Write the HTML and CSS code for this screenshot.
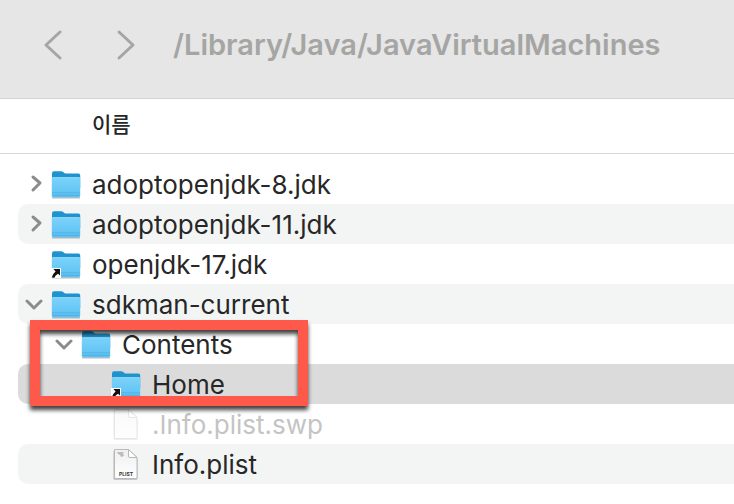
FILE: index.html
```html
<!DOCTYPE html>
<html lang="ko">
<head>
    <meta charset="UTF-8">
    <title>/Library/Java/JavaVirtualMachines</title>
    <link rel="stylesheet" href="styles.css">
</head>
<body>
    <svg class="defs" aria-hidden="true">
        <defs>
            <linearGradient id="folderFront" x1="0" y1="0" x2="0" y2="1">
                <stop offset="0" stop-color="#7bd2fa"/>
                <stop offset="1" stop-color="#5cc0f2"/>
            </linearGradient>
            <linearGradient id="paper" x1="0" y1="0" x2="0" y2="1">
                <stop offset="0" stop-color="#efefef"/>
                <stop offset="1" stop-color="#ffffff"/>
            </linearGradient>
            <symbol id="folder" viewBox="0 0 32 32">
                <path d="M2 29h28v1.500H2z" fill="#000" opacity=".25"/>
                <path d="M2 5.500Q2 3.300 4 3.300h7.200q1.200 0 2 .8l1.100 1q.4.4 1.200.4H28.500q1.700 0 1.700 1.700V20H2z" fill="#1e93cd"/>
                <path d="M1.800 10.500Q1.800 9.300 3 9.300h26q1.200 0 1.200 1.200v17q0 1.800-1.800 1.800H3.600q-1.800 0-1.800-1.800z" fill="url(#folderFront)"/>
                <path d="M2.500 9.800h27" stroke="#92dcfc" stroke-width="1"/>
                <path d="M2 24.800h28M2 27.300h28" stroke="#45aee3" stroke-width=".7"/>
            </symbol>
            <symbol id="alias" viewBox="0 0 10 10">
                <path d="M0 0h10v10H0z" fill="#fff"/>
                <path d="M2.400 1H9v6.600L7 5.700Q4.200 7.300 3.400 9.700L.7 9.400Q1.600 5.800 4.600 3.400z" fill="#111"/>
            </symbol>
            <symbol id="file" viewBox="0 0 32 32">
                <path d="M3.500 3h15l9 8v19.500q0 1.200-1.200 1.200H4.700q-1.200 0-1.200-1.200z" fill="#000" opacity=".25"/>
                <path d="M4.500 1.500h14L27 9.500v19.800q0 1.200-1.200 1.200H5.700q-1.200 0-1.200-1.200z" fill="url(#paper)" stroke="#b4b4b4" stroke-width=".9"/>
                <path d="M18.500 1.500V8q0 1.500 1.500 1.500h7z" fill="#fff" stroke="#b0b0b0" stroke-width=".9"/>
            </symbol>
        </defs>
    </svg>

    <header class="toolbar">
        <button class="nav-btn" aria-label="Back">
            <svg width="20" height="32" viewBox="0 0 20 32"><path d="M16 3L2 16l14 13"/></svg>
        </button>
        <button class="nav-btn" aria-label="Forward">
            <svg width="20" height="32" viewBox="0 0 20 32"><path d="M3 3l14 13L3 29"/></svg>
        </button>
        <h1 class="path">/Library/Java/JavaVirtualMachines</h1>
    </header>

    <div class="columns">
        <button class="column-name">이름</button>
    </div>

    <main class="files">
        <ul class="tree">
            <li class="row">
                <button class="toggle" aria-label="Expand"><svg width="20" height="20" viewBox="0 0 20 20"><path d="M8 3l7 6-7 7"/></svg></button>
                <svg class="icon"><use href="#folder"/></svg>
                <span class="name">adoptopenjdk-8.jdk</span>
            </li>
            <li class="row striped">
                <button class="toggle" aria-label="Expand"><svg width="20" height="20" viewBox="0 0 20 20"><path d="M8 3l7 6-7 7"/></svg></button>
                <svg class="icon"><use href="#folder"/></svg>
                <span class="name">adoptopenjdk-11.jdk</span>
            </li>
            <li class="row">
                <span class="toggle"></span>
                <svg class="icon"><use href="#folder"/><use href="#alias" x="1" y="20" width="10" height="10"/></svg>
                <span class="name">openjdk-17.jdk</span>
            </li>
            <li class="row striped">
                <button class="toggle" aria-label="Collapse"><svg width="20" height="20" viewBox="0 0 20 20"><path d="M2 7l7 7 7-7"/></svg></button>
                <svg class="icon"><use href="#folder"/></svg>
                <span class="name">sdkman-current</span>
            </li>
            <li class="row level-1">
                <button class="toggle" aria-label="Collapse"><svg width="20" height="20" viewBox="0 0 20 20"><path d="M2 7l7 7 7-7"/></svg></button>
                <svg class="icon"><use href="#folder"/></svg>
                <span class="name">Contents</span>
            </li>
            <li class="row level-2 selected">
                <span class="toggle"></span>
                <svg class="icon"><use href="#folder"/><use href="#alias" x="1" y="20" width="10" height="10"/></svg>
                <span class="name">Home</span>
            </li>
            <li class="row level-2 hidden-file">
                <span class="toggle"></span>
                <svg class="icon"><use href="#file"/></svg>
                <span class="name">.Info.plist.swp</span>
            </li>
            <li class="row level-2 striped">
                <span class="toggle"></span>
                <svg class="icon">
                    <use href="#file"/>
                    <path d="M7 4h7l-1 1 1 3-3 1-1-2-2-1z" fill="#bdbdbd"/>
                    <text class="file-type" x="16" y="28">PLIST</text>
                </svg>
                <span class="name">Info.plist</span>
            </li>
        </ul>
        <div class="highlight"></div>
    </main>
</body>
</html>
```

FILE: styles.css
```css
* {
    box-sizing: border-box;
}

body {
    margin: 0;
    font-family: Inter, "Noto Sans CJK KR", sans-serif;
    background: #fff;
    color: #272727;
    font-size: 26px;
}

button {
    padding: 0;
    border: none;
    background: none;
    color: inherit;
    font: inherit;
    cursor: pointer;
}

.defs {
    position: absolute;
    width: 0;
    height: 0;
}

.toolbar {
    display: flex;
    align-items: center;
    height: 99px;
    padding: 0 32px 8px;
    background: #e6e6e6;
    border-bottom: 1px solid #d2d2d2;
}

.nav-btn {
    display: flex;
    justify-content: center;
    width: 44px;
    margin-right: 28px;
}

.nav-btn svg,
.toggle svg {
    fill: none;
    stroke: #a5a5a3;
    stroke-width: 3;
    stroke-linecap: round;
    stroke-linejoin: round;
}

.path {
    margin: 0 0 0 -3px;
    color: #a5a5a3;
    font-size: 29px;
    font-weight: 600;
    line-height: 36px;
    white-space: nowrap;
}

.columns {
    display: flex;
    align-items: center;
    height: 55px;
    padding: 0 92px 6px;
    border-bottom: 1px solid #d6d6d6;
}

.column-name {
    font-size: 21px;
    font-weight: 500;
}

.files {
    position: relative;
    padding: 10px 0 20px 18px;
}

.tree {
    margin: 0;
    padding: 0;
    list-style: none;
}

.row {
    display: flex;
    align-items: center;
    height: 40px;
    padding-left: 2px;
    border-radius: 10px 0 0 10px;
}

.level-1 {
    padding-left: 32px;
}

.level-2 {
    padding-left: 62px;
}

.striped {
    background: #f3f5f4;
}

.selected {
    background: #dbdbdb;
}

.toggle {
    display: flex;
    justify-content: center;
    width: 30px;
}

.toggle svg {
    stroke: #8c8c8c;
}

.icon {
    width: 32px;
    height: 32px;
    margin-right: 10px;
}

.name {
    padding-top: 2px;
    line-height: 32px;
    white-space: nowrap;
}

.file-type {
    font-size: 5px;
    font-weight: 700;
    text-anchor: middle;
    fill: #333;
}

.hidden-file .icon {
    opacity: 0.35;
}

.hidden-file .name {
    color: #c4c4c4;
}

/* Red frame around Contents and Home */
.highlight {
    position: absolute;
    top: 166px;
    left: 30px;
    width: 278px;
    height: 86px;
    border: 10px solid #ff594b;
    filter: drop-shadow(0 4px 2px rgba(0, 0, 0, 0.75));
    pointer-events: none;
}
```
